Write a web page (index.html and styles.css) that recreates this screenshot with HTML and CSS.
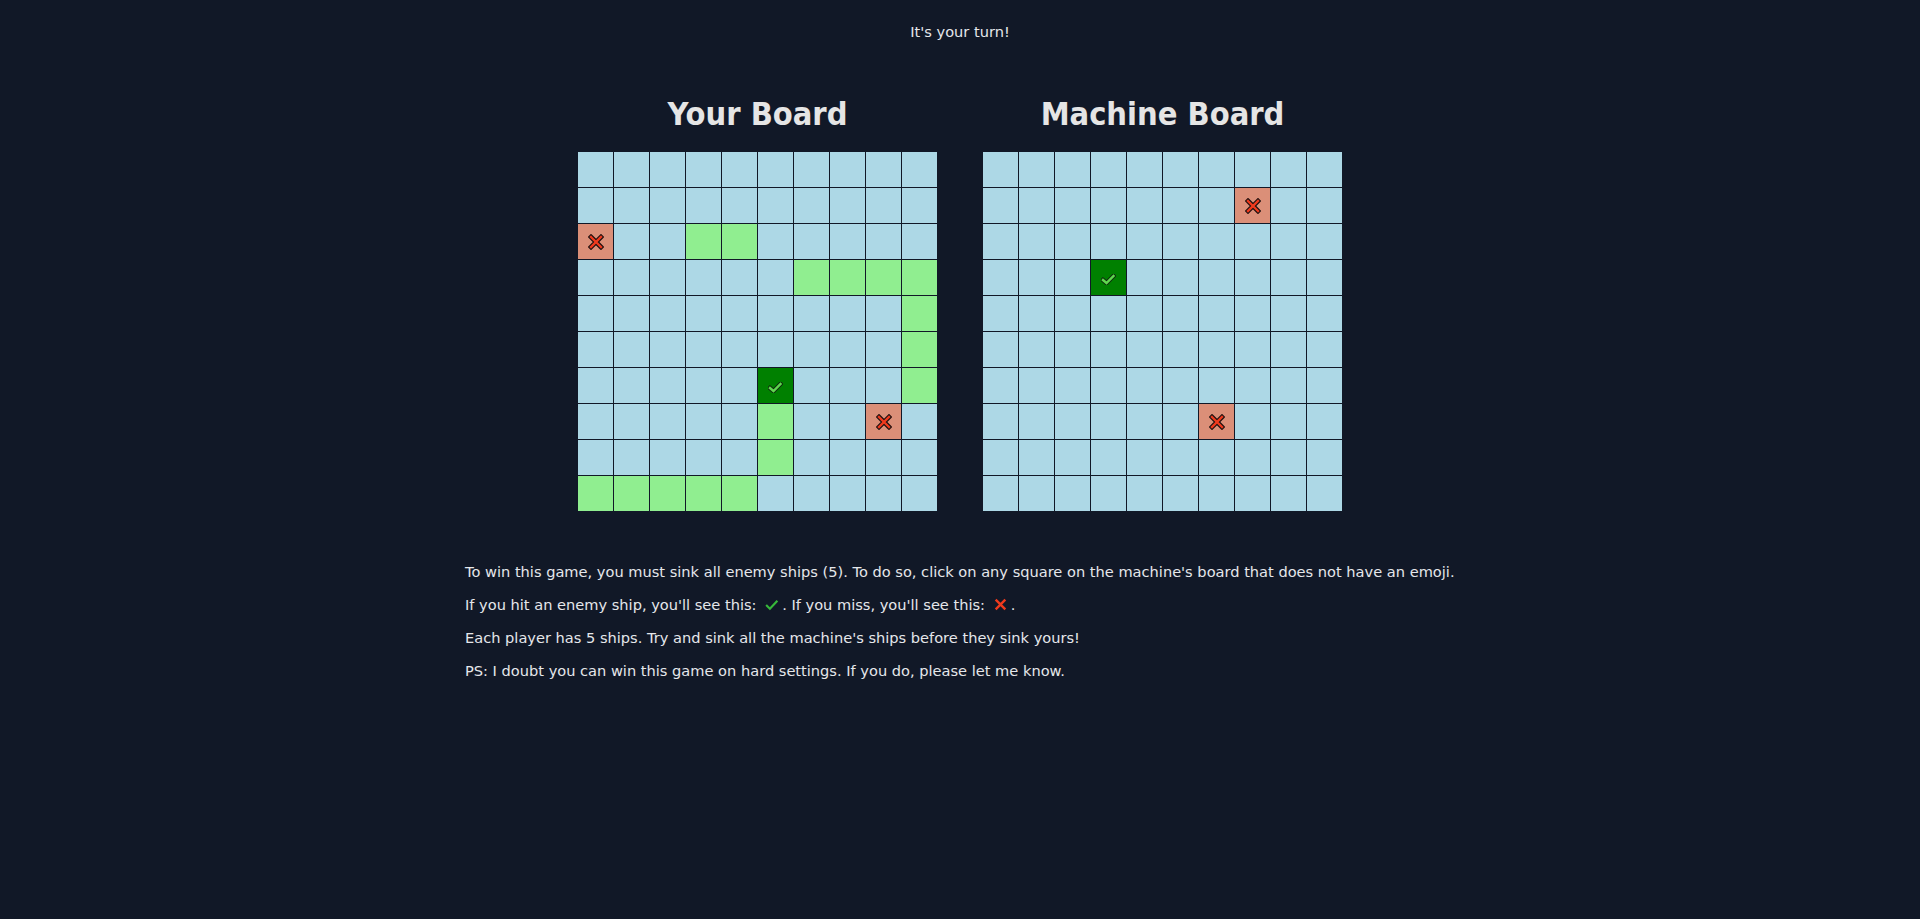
FILE: index.html
```html
<!DOCTYPE html>
<html lang="en">
<head>
<meta charset="utf-8">
<title>Battleship</title>
<link rel="stylesheet" href="styles.css">
</head>
<body>
<svg width="0" height="0" class="defs">
  <defs>
    <g id="xmark">
      <path d="M3 3 L13 13 M13 3 L3 13" stroke="#1b1010" stroke-width="4.6" stroke-linecap="square" fill="none"/>
      <path d="M3 3 L13 13 M13 3 L3 13" stroke="#ef3a1d" stroke-width="2.4" stroke-linecap="square" fill="none"/>
    </g>
    <g id="cmark">
      <path d="M2 6 L5.5 9 L12.5 2" stroke="#0e2a0e" stroke-width="4.4" stroke-linecap="square" stroke-linejoin="miter" fill="none"/>
      <path d="M2 6 L5.5 9 L12.5 2" stroke="#5fd84e" stroke-width="2.4" stroke-linecap="square" stroke-linejoin="miter" fill="none"/>
    </g>
  </defs>
</svg>

<main class="page">
  <p class="status">It's your turn!</p>

  <section class="boards">
    <div class="board-col">
      <h2 class="board-title">Your Board</h2>
      <div class="grid" id="player"></div>
    </div>
    <div class="board-col">
      <h2 class="board-title">Machine Board</h2>
      <div class="grid" id="machine"></div>
    </div>
  </section>

  <section class="rules">
    <p>To win this game, you must sink all enemy ships (5). To do so, click on any square on the machine's board that does not have an emoji.</p>
    <p>If you hit an enemy ship, you'll see this: <svg class="inline-icon" viewBox="0 0 14 14"><path d="M2 7.5 L5.5 11 L12.5 3.5" stroke="#37b83a" stroke-width="2" fill="none"/></svg>. If you miss, you'll see this: <svg class="inline-icon" viewBox="0 0 14 14"><path d="M2.5 2.5 L11.5 11.5 M11.5 2.5 L2.5 11.5" stroke="#ef3a1d" stroke-width="2.2" fill="none"/></svg>.</p>
    <p>Each player has 5 ships. Try and sink all the machine's ships before they sink yours!</p>
    <p>PS: I doubt you can win this game on hard settings. If you do, please let me know.</p>
  </section>
</main>

<script src="app.js"></script>
</body>
</html>
```

FILE: styles.css
```css
html, body {
  margin: 0;
  padding: 0;
  background: #111827;
}

body {
  font-family: "DejaVu Sans", Verdana, sans-serif;
  font-size: 14.6px;
  color: #e5e7eb;
  min-height: 919px;
}

.defs {
  position: absolute;
  width: 0;
  height: 0;
}

.page {
  display: flex;
  flex-direction: column;
  align-items: center;
}

.status {
  margin: 23px 0 0;
  line-height: 17px;
  text-align: center;
}

.boards {
  display: flex;
  justify-content: center;
  gap: 46px;
  margin-top: 55px;
}

.board-col {
  display: flex;
  flex-direction: column;
  align-items: center;
}

.board-title {
  margin: 0 0 19px;
  font-family: "DejaVu Sans Condensed", "DejaVu Sans", sans-serif;
  font-weight: bold;
  font-size: 32.3px;
  line-height: 38px;
  color: #e5e5e5;
}

.grid {
  display: grid;
  grid-template-columns: repeat(10, 35px);
  grid-auto-rows: 35px;
  gap: 1px;
}

.cell {
  background: #add8e6;
  display: flex;
  align-items: center;
  justify-content: center;
}

.cell.ship {
  background: #90ee90;
}

.cell.hit {
  background: #008000;
}

.cell.miss {
  background: #db8f78;
}

.cell svg.x {
  width: 16px;
  height: 16px;
}

.cell svg.c {
  width: 15px;
  height: 11px;
  margin-top: 3px;
}

.rules {
  width: 990px;
  margin-top: 51px;
}

.rules p {
  margin: 0 0 14px;
  line-height: 19px;
}

.inline-icon {
  width: 15px;
  height: 15px;
  vertical-align: -2px;
  margin: 0 3px 0 3px;
}
```

FILE: app.js
```js
(function () {
  var player = {
    "2,0": "miss", "2,3": "ship", "2,4": "ship",
    "3,6": "ship", "3,7": "ship", "3,8": "ship", "3,9": "ship",
    "4,9": "ship", "5,9": "ship",
    "6,5": "hit", "6,9": "ship",
    "7,5": "ship", "7,8": "miss",
    "8,5": "ship",
    "9,0": "ship", "9,1": "ship", "9,2": "ship", "9,3": "ship", "9,4": "ship"
  };
  var machine = { "1,7": "miss", "3,3": "hit", "7,6": "miss" };

  function build(id, map) {
    var el = document.getElementById(id);
    var html = "";
    for (var r = 0; r < 10; r++) {
      for (var c = 0; c < 10; c++) {
        var s = map[r + "," + c] || "";
        var inner = "";
        if (s === "miss") inner = '<svg class="x" viewBox="0 0 16 16"><use href="#xmark"/></svg>';
        if (s === "hit") inner = '<svg class="c" viewBox="0 0 15 11"><use href="#cmark"/></svg>';
        html += '<div class="cell ' + s + '">' + inner + '</div>';
      }
    }
    el.innerHTML = html;
  }
  build("player", player);
  build("machine", machine);
})();
```
